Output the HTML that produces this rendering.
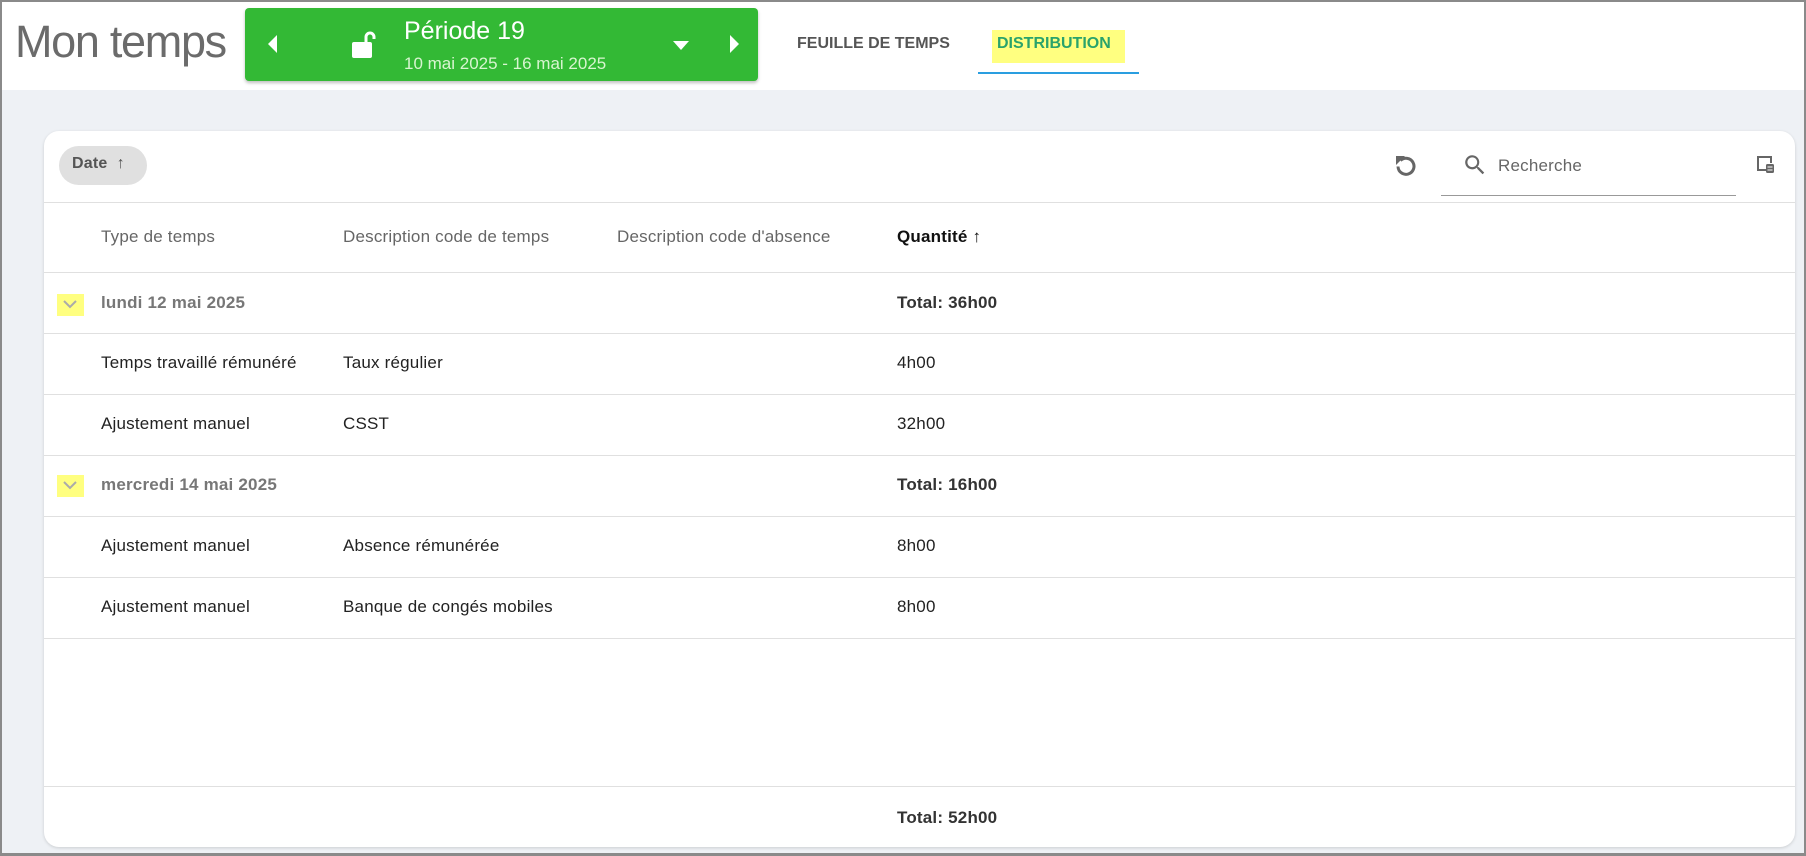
<!DOCTYPE html>
<html><head><meta charset="utf-8"><style>
*{box-sizing:border-box;margin:0;padding:0}
body{width:1806px;height:856px;overflow:hidden;font-family:"Liberation Sans",sans-serif;background:#eef1f5;position:relative}
.frame{position:absolute;inset:0;border:2px solid #8a8a8a;border-bottom-width:3px;pointer-events:none;z-index:10}
.hdr{position:absolute;left:0;top:0;width:1806px;height:90px;background:#fff}
.title{position:absolute;left:15px;top:16px;font-size:45px;color:#6b6b6b;letter-spacing:-1.3px}
.green{position:absolute;left:245px;top:8px;width:513px;height:73px;background:#33b935;border-radius:4px;box-shadow:0 2px 3px rgba(0,0,0,.25);color:#fff}
.tab{position:absolute;font-size:16px;font-weight:bold;color:#555;top:35px}
.card{position:absolute;left:44px;top:131px;width:1751px;height:716px;background:#fff;border-radius:15px;box-shadow:0 1px 3px rgba(0,0,0,.15)}
.line{position:absolute;left:44px;width:1751px;height:1px;background:#e0e0e0}
.t{position:absolute;font-size:17px;color:#222;white-space:nowrap;letter-spacing:0.2px}
.h{color:#666}
.g{color:#777;font-weight:bold}
.b{font-weight:bold;color:#333}
.chev{position:absolute;left:57px;width:27px;height:22px;background:#ffff80}
</style></head><body>
<div class="hdr"></div>
<div class="title">Mon temps</div>
<div class="green">
<svg style="position:absolute;left:20px;top:26px" width="14" height="20"><path d="M12 1 L3 10 L12 19Z" fill="#fff"/></svg>
<svg style="position:absolute;left:104px;top:22px" width="30" height="30"><rect x="3" y="12" width="20" height="16" rx="2" fill="#fff"/><path d="M17 12 V7 a4 4 0 0 1 8 0 V9" stroke="#fff" stroke-width="3" fill="none"/></svg>
<div style="position:absolute;left:159px;top:9px;font-size:25px">Période 19</div>
<div style="position:absolute;left:159px;top:46px;font-size:17px;color:#d8f5d0">10 mai 2025 - 16 mai 2025</div>
<svg style="position:absolute;left:427px;top:32px" width="18" height="12"><path d="M1 1 H17 L9 10Z" fill="#fff"/></svg>
<svg style="position:absolute;left:483px;top:26px" width="14" height="20"><path d="M2 1 L11 10 L2 19Z" fill="#fff"/></svg>
</div>
<div class="tab" style="left:797px">FEUILLE DE TEMPS</div>
<div style="position:absolute;left:992px;top:30px;width:133px;height:33px;background:#ffff80"></div>
<div class="tab" style="left:997px;color:#2aa36b">DISTRIBUTION</div>
<div style="position:absolute;left:978px;top:72px;width:161px;height:2px;background:#2a9ee0"></div>

<div class="card"></div>
<div style="position:absolute;left:59px;top:146px;width:88px;height:39px;border-radius:20px;background:#e0e0e0"></div>
<div class="t" style="left:72px;top:155px;font-size:16px;color:#555;font-weight:bold">Date&nbsp;&nbsp;<span style="font-weight:normal">↑</span></div>
<svg style="position:absolute;left:1392px;top:152px" width="28" height="28" viewBox="0 0 28 28"><path d="M8.5 8.5 A8 8 0 1 1 6 14.5" stroke="#666" stroke-width="3" fill="none"/><path d="M4 4 L13 4 L4 13Z" fill="#666"/></svg>
<svg style="position:absolute;left:1462px;top:152px" width="26" height="26" viewBox="0 0 24 24"><path d="M15.5 14h-.8l-.3-.3A6.5 6.5 0 1 0 9.5 16c1.6 0 3.1-.6 4.2-1.6l.3.3v.8l5 5 1.5-1.5-5-5zm-6 0C7 14 5 12 5 9.5S7 5 9.5 5 14 7 14 9.5 12 14 9.5 14z" fill="#666"/></svg>
<div class="t" style="left:1498px;top:156px;color:#666">Recherche</div>
<div style="position:absolute;left:1441px;top:195px;width:295px;height:1px;background:#999"></div>
<svg style="position:absolute;left:1755px;top:154px" width="22" height="22"><path d="M12 16H3V3h13v6" stroke="#666" stroke-width="2" fill="none"/><rect x="11" y="10" width="8" height="9" rx="1.5" fill="#666"/><path d="M12.5 13h5M12.5 16h5" stroke="#fff" stroke-width="1"/></svg>

<div class="line" style="top:202px"></div>
<div class="t h" style="left:101px;top:227px">Type de temps</div>
<div class="t h" style="left:343px;top:227px">Description code de temps</div>
<div class="t h" style="left:617px;top:227px">Description code d'absence</div>
<div class="t" style="left:897px;top:227px;color:#111;font-weight:bold">Quantité <span style="font-weight:normal">↑</span></div>
<div class="line" style="top:272px"></div>

<div class="chev" style="top:294px"></div><svg style="position:absolute;left:62px;top:298px" width="16" height="12"><path d="M2 3l6 6 6-6" stroke="#aaa" stroke-width="2" fill="none"/></svg>
<div class="t g" style="left:101px;top:293px">lundi 12 mai 2025</div>
<div class="t b" style="left:897px;top:293px">Total: 36h00</div>
<div class="line" style="top:333px"></div>
<div class="t" style="left:101px;top:353px">Temps travaillé rémunéré</div>
<div class="t" style="left:343px;top:353px">Taux régulier</div>
<div class="t" style="left:897px;top:353px">4h00</div>
<div class="line" style="top:394px"></div>
<div class="t" style="left:101px;top:414px">Ajustement manuel</div>
<div class="t" style="left:343px;top:414px">CSST</div>
<div class="t" style="left:897px;top:414px">32h00</div>
<div class="line" style="top:455px"></div>
<div class="chev" style="top:475px"></div><svg style="position:absolute;left:62px;top:479px" width="16" height="12"><path d="M2 3l6 6 6-6" stroke="#aaa" stroke-width="2" fill="none"/></svg>
<div class="t g" style="left:101px;top:475px">mercredi 14 mai 2025</div>
<div class="t b" style="left:897px;top:475px">Total: 16h00</div>
<div class="line" style="top:516px"></div>
<div class="t" style="left:101px;top:536px">Ajustement manuel</div>
<div class="t" style="left:343px;top:536px">Absence rémunérée</div>
<div class="t" style="left:897px;top:536px">8h00</div>
<div class="line" style="top:577px"></div>
<div class="t" style="left:101px;top:597px">Ajustement manuel</div>
<div class="t" style="left:343px;top:597px">Banque de congés mobiles</div>
<div class="t" style="left:897px;top:597px">8h00</div>
<div class="line" style="top:638px"></div>
<div class="line" style="top:786px"></div>
<div class="t b" style="left:897px;top:808px">Total: 52h00</div>
<div class="frame"></div>
</body></html>
